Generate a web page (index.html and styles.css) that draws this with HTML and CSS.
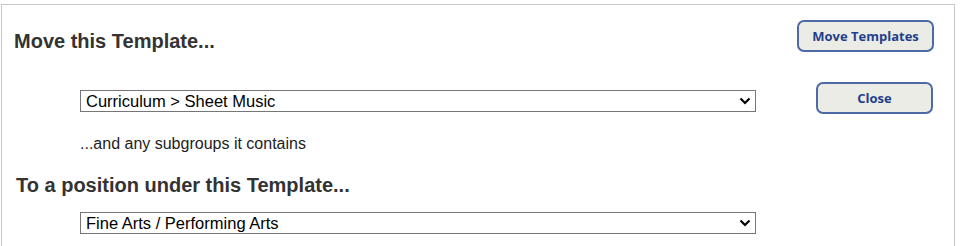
FILE: index.html
```html
<!DOCTYPE html>
<html lang="en">
<head>
    <meta charset="UTF-8">
    <title>Move Template</title>
    <link rel="stylesheet" href="styles.css">
</head>
<body>
    <div class="panel">
        <div class="move-form">
            <h2 class="first">Move this Template...</h2>
            <select class="group-select">
                <option>Curriculum &gt; Sheet Music</option>
            </select>
            <p class="hint">...and any subgroups it contains</p>
            <h2 class="second">To a position under this Template...</h2>
            <select class="group-select target">
                <option>Fine Arts / Performing Arts</option>
            </select>
        </div>
        <div class="actions">
            <button class="btn btn-move">Move Templates</button>
            <button class="btn btn-close">Close</button>
        </div>
    </div>
</body>
</html>
```

FILE: styles.css
```css
* {
    box-sizing: border-box;
}

body {
    margin: 0;
    font-family: "Liberation Sans", Arial, sans-serif;
    background: #ffffff;
    color: #222222;
    overflow: hidden;
}

/* Panel */
.panel {
    margin: 4px 0 0 1px;
    width: 954px;
    height: 242px;
    border: 1px solid #c8c8c8;
    border-bottom: none;
    display: flex;
}

.move-form {
    flex: 1;
    display: flex;
    flex-direction: column;
    align-items: flex-start;
}

.move-form h2 {
    font-size: 20px;
    line-height: 23px;
    font-weight: bold;
    color: #333333;
    margin: 0;
}

.move-form h2.first {
    margin: 25px 0 0 12px;
}

.move-form h2.second {
    margin: 21px 0 0 14px;
}

.group-select {
    appearance: none;
    width: 676px;
    height: 22px;
    margin: 37px 0 0 78px;
    padding: 0 20px 0 5px;
    font-family: "Liberation Sans", Arial, sans-serif;
    font-size: 16.5px;
    color: #000000;
    background: #ffffff url("data:image/svg+xml,%3Csvg xmlns='http://www.w3.org/2000/svg' width='12' height='8' viewBox='0 0 12 8'%3E%3Cpath d='M1.5 1.5 6 6 10.5 1.5' fill='none' stroke='%23000' stroke-width='2.2'/%3E%3C/svg%3E") no-repeat right 4px center;
    border: 1px solid #767676;
    border-radius: 0;
}

.group-select.target {
    margin-top: 15px;
}

.hint {
    font-size: 16px;
    line-height: 18px;
    margin: 23px 0 0 78px;
    color: #222222;
}

/* Buttons */
.actions {
    width: 200px;
    display: flex;
    flex-direction: column;
    align-items: flex-end;
    padding: 15px 20px 0 0;
    gap: 30px;
}

.btn {
    height: 32px;
    background: #ecece6;
    border: 2px solid #4d6aa6;
    border-radius: 7px;
    color: #1f3f8c;
    font-family: "Open Sans", sans-serif;
    font-weight: bold;
    font-size: 13px;
    cursor: pointer;
}

.btn-move {
    width: 137px;
}

.btn-close {
    width: 117px;
    margin-right: 1px;
}
```
